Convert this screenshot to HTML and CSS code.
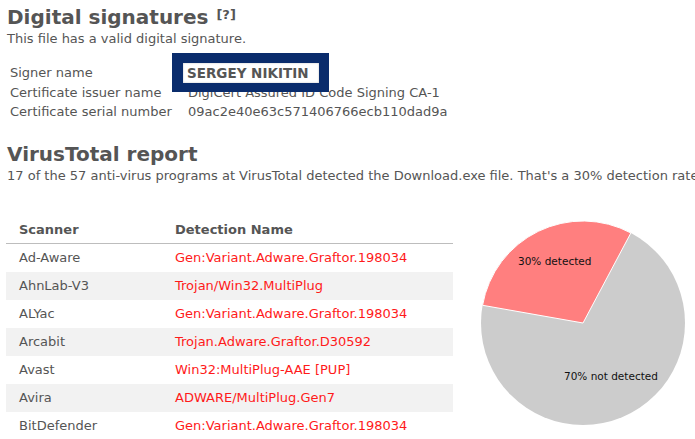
FILE: index.html
```html
<!DOCTYPE html>
<html>
<head>
<meta charset="utf-8">
<link rel="stylesheet" href="styles.css">
</head>
<body>
<div class="page">
  <h2 class="heading">Digital signatures <sup class="help">[?]</sup></h2>
  <p class="intro">This file has a valid digital signature.</p>
  <div class="sig-wrap">
    <table class="sig">
      <tr><td class="lbl">Signer name</td><td class="val">SERGEY NIKITIN</td></tr>
      <tr><td class="lbl">Certificate issuer name</td><td class="val">DigiCert Assured ID Code Signing CA-1</td></tr>
      <tr><td class="lbl">Certificate serial number</td><td class="val">09ac2e40e63c571406766ecb110dad9a</td></tr>
    </table>
    <div class="highlight"><span>SERGEY NIKITIN</span></div>
  </div>

  <h2 class="heading vt">VirusTotal report</h2>
  <p class="desc">17 of the 57 anti-virus programs at VirusTotal detected the Download.exe file. That's a 30% detection rate.</p>

  <div class="report">
    <table class="scan">
      <thead>
        <tr><th class="c1">Scanner</th><th>Detection Name</th></tr>
      </thead>
      <tbody>
        <tr><td class="c1">Ad-Aware</td><td class="det">Gen:Variant.Adware.Graftor.198034</td></tr>
        <tr><td class="c1">AhnLab-V3</td><td class="det">Trojan/Win32.MultiPlug</td></tr>
        <tr><td class="c1">ALYac</td><td class="det">Gen:Variant.Adware.Graftor.198034</td></tr>
        <tr><td class="c1">Arcabit</td><td class="det">Trojan.Adware.Graftor.D30592</td></tr>
        <tr><td class="c1">Avast</td><td class="det">Win32:MultiPlug-AAE [PUP]</td></tr>
        <tr><td class="c1">Avira</td><td class="det">ADWARE/MultiPlug.Gen7</td></tr>
        <tr><td class="c1">BitDefender</td><td class="det">Gen:Variant.Adware.Graftor.198034</td></tr>
      </tbody>
    </table>
    <svg class="pie" width="210" height="210" viewBox="0 0 210 210">
      <circle cx="105" cy="105" r="102" fill="#cccccc"/>
      <path d="M105 105 L4.55 87.29 A102 102 0 0 1 152.88 14.94 Z" fill="#ff7f7f" stroke="#ffffff" stroke-width="1"/>
      <text x="40" y="47" class="pie-label">30% detected</text>
      <text x="86" y="162" class="pie-label">70% not detected</text>
    </svg>
  </div>
</div>
</body>
</html>
```
FILE: styles.css
```css
html, body {
  margin: 0;
  padding: 0;
  background: #ffffff;
}
body {
  font-family: "DejaVu Sans", Verdana, sans-serif;
  color: #555555;
  font-size: 13px;
  overflow: hidden;
}
.page {
  padding: 4px 0 0 7px;
  width: 688px;
}
.heading {
  font-size: 20px;
  font-weight: bold;
  margin: 0;
  line-height: 26px;
  white-space: nowrap;
}
.help {
  font-size: 13px;
  vertical-align: top;
  position: relative;
  top: -2px;
  margin-left: 1px;
}
.intro {
  margin: 0;
  line-height: 17px;
}
.sig-wrap {
  position: relative;
  margin-top: 16px;
}
.sig {
  border-collapse: collapse;
}
.sig td {
  padding: 0;
  height: 19.5px;
  line-height: 19.5px;
  white-space: nowrap;
}
.sig .lbl {
  padding-left: 3px;
  width: 178px;
}
.highlight {
  position: absolute;
  left: 165px;
  top: -10px;
  width: 136px;
  height: 21px;
  border: solid #0a2c6c;
  border-width: 10px 10px 8px 11px;
  background: #0a2c6c;
}
.highlight span {
  display: block;
  background: #ffffff;
  height: 20px;
  line-height: 20px;
  font-weight: bold;
  font-size: 13.5px;
  padding-left: 4px;
  box-shadow: inset 0 0 2px #bbbbbb;
  white-space: nowrap;
}
.vt {
  margin-top: 19px;
}
.desc {
  margin: 0;
  line-height: 18px;
  white-space: nowrap;
}
.report {
  display: flex;
  align-items: flex-start;
  margin-top: 31px;
  margin-left: -1px;
}
.scan {
  border-collapse: collapse;
  width: 447px;
  flex: none;
}
.scan th {
  text-align: left;
  font-weight: bold;
  height: 27px;
  padding: 0;
  border-bottom: 1px solid #bdbdbd;
}
.scan td {
  height: 28px;
  padding: 0;
  white-space: nowrap;
}
.scan .c1 {
  width: 156px;
  padding-left: 13px;
}
.scan tbody tr:nth-child(even) {
  background: #f2f2f2;
}
.det {
  color: #ff1a1a;
}
.pie {
  flex: none;
  margin-left: 25px;
  margin-top: 2px;
}
.pie-label {
  font-family: "DejaVu Sans", Verdana, sans-serif;
  font-size: 10.5px;
  fill: #111111;
}
```
